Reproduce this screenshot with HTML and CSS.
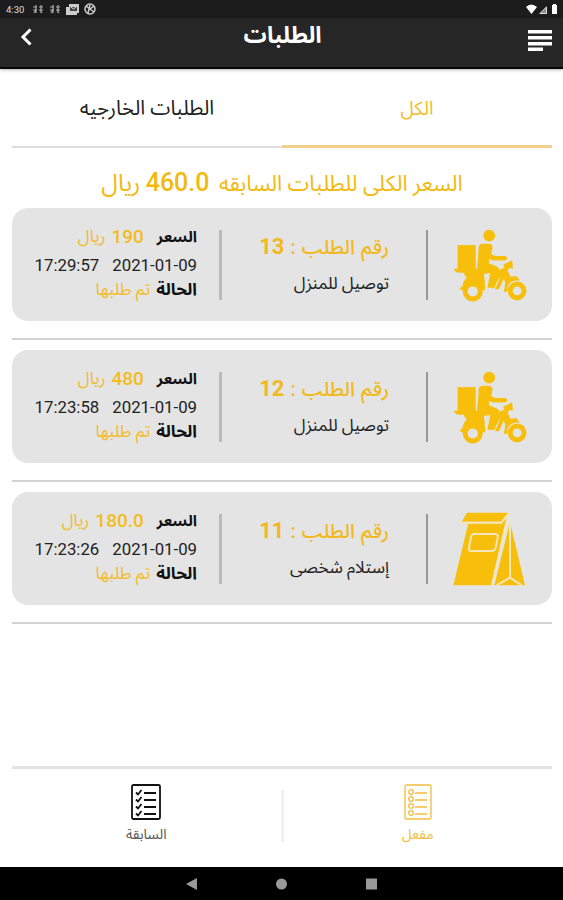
FILE: index.html
```html
<!DOCTYPE html>
<html lang="ar" dir="rtl">
<head>
  <meta charset="UTF-8" />
  <meta name="viewport" content="width=device-width, initial-scale=1" />
  <title>الطلبات</title>
  <link rel="stylesheet" href="styles.css">
</head>
<body>

  <svg class="sprite" width="0" height="0">
    <symbol id="bike" viewBox="36 21 225 225">
      <circle cx="146" cy="44" r="18" />
      <path d="M50 73h55v75H50z" />
      <path d="M38 145h72v12H56q-13 0-18-12z" />
      <path d="M66 152h62l4 24 2 34h-66l-12-3q2-7 9-9 2-18 13-26-8-6-10-20z" />
      <path d="M114 78q2-9 12-9h19q12 1 11 13l-4 19 13 5h28q8 1 8 7t-8 7h-36l-11-5-1 13 25 10q8 5 6 14l-13 51h-22l8-45-24 4q-18-1-16-20l3-26z" />
      <circle cx="96" cy="214" r="23" class="wheel" />
      <circle cx="231" cy="212" r="21" class="wheel" />
      <path d="M189 132l27-13 2 27-9-4-7 8 9 19 17-2 12 14q-28-4-38 18l-2 16h-9l4-28-5-12-14 32h-12l18-43-22 37h-11l26-50q6-8 17-8z" />
    </symbol>
    <symbol id="bag" viewBox="0 0 220 222">
      <path d="M41 2h124l-20 27H25z" />
      <path d="M45 34h98l20-24-49 210H0z" />
      <path d="M168 38h4l43 182h-92z" />
      <path class="cut" d="M20 32h124l21-26-8 34-41 180M170 40v157l-40 23M170 197l35 23" />
      <path class="cut" d="M61 66h64q11 0 8 11l-6 30q-2 10-13 10H55q-11 0-8-11l6-31q2-9 8-9z" />
    </symbol>
  </svg>

  <div class="status-bar">
    <div class="status-left">
      <span>4:30</span>
      <svg width="12" height="10" viewBox="0 0 12 10" fill="none" stroke="#aaa" stroke-width="1.2"><path d="M1 3h4M7 3h4M1 6h4M7 6h4M4 1v8M9 1v8M2 9l2-3M10 9L8 6" /></svg>
      <svg width="12" height="10" viewBox="0 0 12 10" fill="none" stroke="#aaa" stroke-width="1.2"><path d="M1 3h4M7 3h4M1 6h4M7 6h4M4 1v8M9 1v8M2 9l2-3M10 9L8 6" /></svg>
      <svg width="13" height="11" viewBox="0 0 13 11"><path fill="#ccc" d="M3 0h10v9h-2v2H0V3h3z" /><path d="M4 3h7v4H4z" fill="#444" /><path d="M5 3l2.500 2L10 3" stroke="#ddd" fill="none" /></svg>
      <svg width="12" height="12" viewBox="0 0 12 12" fill="none" stroke="#ccc" stroke-width="1.500"><circle cx="6" cy="6" r="5" /><path d="M2 3l8 6M4 10l2-8M6 6l4-3" /></svg>
    </div>
    <svg width="32" height="11" viewBox="0 0 32 11" fill="#fff"><path d="M0 3q5-5 11 0L5.500 10z" /><path d="M13 10l8-8v8z" fill="#888" /><path d="M14 9.500l6.500-6.500v6.500z" fill="none" stroke="#ddd" /><path d="M26 1h1V0h3v1h1v9h-5z" /></svg>
  </div>

  <header class="header">
    <svg class="menu-icon" width="24" height="22" viewBox="0 0 24 22" fill="#fff"><path d="M0 0h24v3.500H0zM0 6h24v3.500H0zM0 12h24v3.500H0zM0 17.500h15V21H0z" /></svg>
    <h1>الطلبات</h1>
    <svg class="back-icon" width="13" height="18" viewBox="0 0 13 18" fill="none" stroke="#fff" stroke-width="3"><path d="M10.500 1.500L3 9l7.500 7.500" /></svg>
  </header>

  <main class="content">
    <nav class="tabs">
      <a class="tab active">الكل</a>
      <a class="tab">الطلبات الخارجيه</a>
    </nav>

    <h2 class="total">السعر الكلى للطلبات السابقه <b>460.0</b> <span>ريال</span></h2>

    <section class="order">
      <div class="card">
        <div class="kind"><svg class="order-icon"><use href="#bike" /></svg></div>
        <div class="info">
          <p class="number">رقم الطلب : <b>13</b></p>
          <p class="method">توصيل للمنزل</p>
        </div>
        <div class="details">
          <p class="price"><strong>السعر</strong><b>190</b><span>ريال</span></p>
          <p class="date"><span>2021-01-09</span><span>17:29:57</span></p>
          <p class="state"><strong>الحالة</strong><span>تم طلبها</span></p>
        </div>
      </div>
    </section>

    <section class="order">
      <div class="card">
        <div class="kind"><svg class="order-icon"><use href="#bike" /></svg></div>
        <div class="info">
          <p class="number">رقم الطلب : <b>12</b></p>
          <p class="method">توصيل للمنزل</p>
        </div>
        <div class="details">
          <p class="price"><strong>السعر</strong><b>480</b><span>ريال</span></p>
          <p class="date"><span>2021-01-09</span><span>17:23:58</span></p>
          <p class="state"><strong>الحالة</strong><span>تم طلبها</span></p>
        </div>
      </div>
    </section>

    <section class="order">
      <div class="card">
        <div class="kind"><svg class="order-icon"><use href="#bag" /></svg></div>
        <div class="info">
          <p class="number">رقم الطلب : <b>11</b></p>
          <p class="method">إستلام شخصى</p>
        </div>
        <div class="details">
          <p class="price"><strong>السعر</strong><b>180.0</b><span>ريال</span></p>
          <p class="date"><span>2021-01-09</span><span>17:23:26</span></p>
          <p class="state"><strong>الحالة</strong><span>تم طلبها</span></p>
        </div>
      </div>
    </section>
  </main>

  <footer class="bottom-tabs">
    <a class="bottom-tab active">
      <svg width="28" height="36" viewBox="0 0 28 36" fill="none" stroke="currentColor" stroke-width="1.3"><rect x="1" y="1" width="26" height="34" rx="1.500" /><path d="M11 9h12M11 16h12M11 23h12M11 30h12" /><circle cx="7" cy="8" r="2.300" /><circle cx="7" cy="15" r="2.300" /><circle cx="7" cy="22" r="2.300" /><circle cx="7" cy="29" r="2.300" /></svg>
      <span>مفعل</span>
    </a>
    <div class="bottom-divider"></div>
    <a class="bottom-tab">
      <svg width="30" height="36" viewBox="0 0 30 36" fill="none" stroke="#111" stroke-width="1.800"><rect x="1" y="1" width="28" height="34" rx="1.500" /><path d="M13 9h12M13 16h12M13 23h12M13 30h12M5 8.500l2 2L10.500 6M5 15.500l2 2 3.500-4.500M5 22.500l2 2 3.500-4.500M5 29.500l2 2 3.500-4.500" /></svg>
      <span>السابقة</span>
    </a>
  </footer>

  <div class="nav-bar">
    <svg width="11" height="12" viewBox="0 0 11 12"><path d="M11 0v12L0 6z" /></svg>
    <svg width="11" height="12" viewBox="0 0 11 12"><circle cx="5.500" cy="6" r="5.500" /></svg>
    <svg width="11" height="12" viewBox="0 0 11 12"><path d="M0 .5h11v11H0z" /></svg>
  </div>

</body>
</html>
```
FILE: styles.css
```css
* {
  box-sizing: border-box;
}

body {
  margin: 0;
  height: 900px;
  display: flex;
  flex-direction: column;
  overflow: hidden;
  font-family: Roboto, 'Noto Sans Arabic', 'DejaVu Sans', sans-serif;
  background: #fff;
  color: #222;
}

h1, h2, p {
  margin: 0;
  font-weight: normal;
  white-space: nowrap;
}

svg {
  flex: none;
  display: block;
}

.sprite {
  position: absolute;
}

.status-bar {
  direction: ltr;
  height: 18px;
  padding: 0 5px 0 6px;
  display: flex;
  align-items: center;
  justify-content: space-between;
  background: #1c1c1c;
  color: #ddd;
  font-size: 9.5px;
}

.status-left {
  display: flex;
  align-items: center;
  gap: 5px;
}

.status-left span {
  width: 21px;
}

.header {
  height: 51px;
  padding: 0 11px 0 20px;
  display: flex;
  justify-content: space-between;
  background: #262626;
  border-bottom: 2px solid #080808;
  box-shadow: 0 1px 3px rgba(0, 0, 0, 0.3);
  color: #fff;
}

.header h1 {
  font-size: 23px;
  font-weight: bold;
  line-height: 35px;
  margin-right: -4px;
}

.menu-icon {
  margin-top: 12px;
}

.back-icon {
  margin-top: 10px;
}

.content {
  flex: 1;
  padding: 1px 11px 0 12px;
}

.tabs {
  display: flex;
  height: 78px;
}

.tab {
  flex: 1;
  text-align: center;
  font-size: 20.4px;
  line-height: 77px;
  border-bottom: 2px solid #ddd;
}

.tab.active {
  font-size: 19px;
  color: #f2bd2c;
  border-bottom: 3px solid #f0d08c;
}

.total {
  height: 60px;
  text-align: center;
  font-size: 21.9px;
  line-height: 70px;
  color: #f2b90f;
}

.total b {
  font-size: 25px;
  font-weight: 500;
  margin-right: 4px;
}

.total span {
  font-size: 24px;
}

.order {
  height: 132px;
  margin-bottom: 10px;
  border-bottom: 2px solid #d3d3d3;
}

.card {
  height: 113px;
  display: flex;
  align-items: center;
  background: #e4e4e4;
  border-radius: 16px;
}

.kind {
  width: 126px;
  height: 70px;
  display: flex;
  align-items: center;
  justify-content: center;
  border-left: 2px solid #999;
}

.order-icon {
  width: 74px;
  height: 74px;
  fill: #f7bf0b;
}

.wheel {
  fill: #e4e4e4;
  stroke: #f7bf0b;
  stroke-width: 15;
}

.cut {
  fill: none;
  stroke: #f3e6bd;
  stroke-width: 6;
}

.info {
  width: 207px;
  height: 70px;
  padding-right: 37px;
  border-left: 3px solid #bbb;
}

.number {
  font-size: 20px;
  font-weight: 500;
  line-height: 34px;
  word-spacing: 1px;
  color: #f2b91c;
}

.number b {
  font-size: 22px;
}

.method {
  font-size: 17px;
  line-height: 38px;
}

.details {
  flex: 1;
  height: 84px;
  padding-right: 22px;
}

.details p {
  display: flex;
  height: 27px;
  align-items: center;
  font-size: 17px;
}

.details strong {
  color: #111;
}

.details .price strong {
  font-size: 15.5px;
}

.details .price b {
  font-size: 19px;
  font-weight: 500;
  color: #f2bd1c;
  margin: 0 13px 0 6px;
}

.details .price {
  padding-top: 1px;
}

.price span,
.state span {
  color: #f2bd2c;
}

.details .state {
  gap: 6px;
}

.details .date {
  gap: 13px;
  font-size: 16.8px;
  padding-top: 4px;
}

.bottom-tabs {
  height: 101px;
  margin: 0 11px 0 12px;
  padding-top: 15px;
  display: flex;
  border-top: 3px solid #e2e2e2;
}

.bottom-tab {
  flex: 1;
  display: flex;
  flex-direction: column;
  align-items: center;
  font-size: 14px;
  color: #555;
}

.bottom-divider {
  width: 3px;
  height: 52px;
  margin-top: 6px;
  background: #f2f2f2;
}

.bottom-tab.active {
  color: #f2bd3c;
}

.nav-bar {
  direction: ltr;
  height: 33px;
  display: flex;
  align-items: center;
  justify-content: center;
  gap: 79px;
  background: #000;
  fill: #999;
}
```
